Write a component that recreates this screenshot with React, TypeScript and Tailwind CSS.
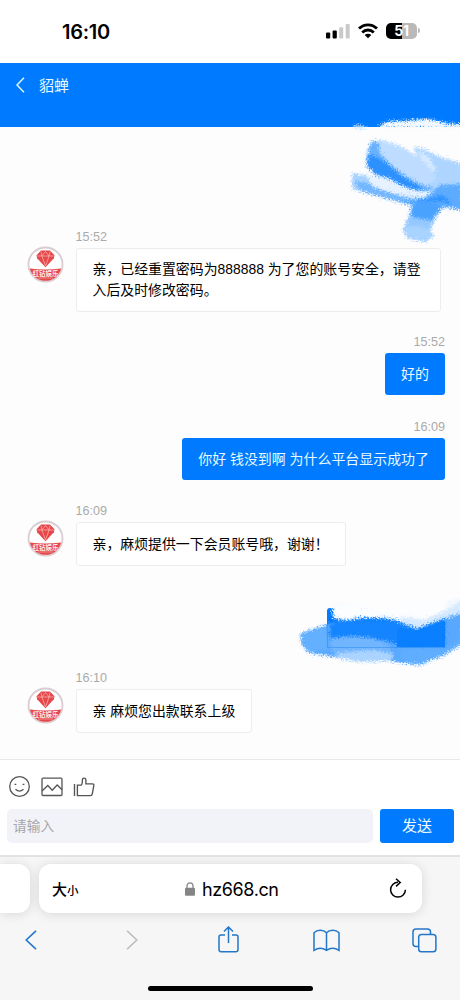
import { ReactNode } from 'react';
import clsx from 'clsx';

type Message = {
  id: number;
  time?: string;
  text: ReactNode;
  mine?: boolean;
  className?: string;
};

const messages: Message[] = [
  {
    id: 1,
    time: '15:52',
    text: '亲，已经重置密码为888888 为了您的账号安全，请登入后及时修改密码。',
    className: 'h-[105px]',
  },
  { id: 2, time: '15:52', text: '好的', mine: true, className: 'h-[85px]' },
  { id: 3, time: '16:09', text: '你好 钱没到啊 为什么平台显示成功了', mine: true, className: 'h-[84px]' },
  { id: 4, time: '16:09', text: '亲，麻烦提供一下会员账号哦，谢谢！', className: 'h-[86px]' },
  { id: 5, text: '', mine: true, className: 'h-[81px]' },
  { id: 6, time: '16:10', text: '亲 麻烦您出款联系上级', className: 'h-[64px]' },
];

function StatusBar() {
  return (
    <div className="flex h-[63px] justify-between bg-white pl-[62px] pr-[40px] text-black">
      <span className="mt-[18px] font-[Inter] text-[20px] font-semibold leading-7 tracking-[-0.3px]">16:10</span>
      <div className="mt-[22px] flex h-[17px] items-center">
        <svg width="24" height="16" viewBox="0 0 24 16" className="mr-[8px]">
          <rect x="0" y="9.5" width="4.2" height="6" rx="1" />
          <rect x="6.6" y="7.5" width="4.2" height="8" rx="1" />
          <rect x="13.2" y="4.2" width="4" height="11.3" rx="1" fill="#c9c9c9" />
          <rect x="19.7" y="1" width="4" height="14.5" rx="1" fill="#c9c9c9" />
        </svg>
        <svg width="20" height="16" viewBox="0 0 20 16" fill="none" stroke="black" strokeWidth="2.8" className="mr-[8px]">
          <path d="M1 5.6C6 .5 14 .5 19 5.6" />
          <path d="M4.2 9.4C7.5 6.2 12.5 6.2 15.8 9.4" />
          <path d="M6.7 11.9C8.6 10.3 11.4 10.3 13.3 11.9L10 15.3z" fill="black" stroke="none" />
        </svg>
        <div className="flex items-center">
          <div className="flex h-4 w-[31px] items-center justify-center rounded-[5px] bg-[linear-gradient(90deg,#000_51%,#b9b9b9_51%)] font-[Inter] text-[14px] font-bold leading-4 tracking-[-0.3px] text-white">
            51
          </div>
          <div className="ml-px h-[5px] w-[2px] rounded-r-full bg-[#b9b9b9]" />
        </div>
      </div>
    </div>
  );
}

function Header() {
  return (
    <header className="flex h-16 bg-[#007bff] pl-4 text-[#e6faff]">
      <svg width="9" height="16" viewBox="0 0 9 16" fill="none" stroke="currentColor" strokeWidth="1.4" className="mt-[14px]">
        <path d="M8 .8L1 8l7 7.2" />
      </svg>
      <h1 className="ml-[14px] mt-[12px] text-[15px] leading-[22px]">貂蝉</h1>
    </header>
  );
}

function Avatar() {
  return (
    <svg width="37" height="37" viewBox="0 0 37 37" className="absolute left-[-49px] top-[17.5px]">
      <circle cx="18.5" cy="18.5" r="17" fill="white" stroke="#d9cdd1" strokeWidth="1.8" />
      <path d="M2.8 22.6Q18.5 24.5 34.2 22.6A16.2 16.2 0 0 1 2.8 22.6z" fill="#e5484b" />
      <path d="M14 4.6h9l4.5 4.6-.6 3-8.4 9-8.4-9-.6-3z" fill="#e5474b" />
      <path
        d="M10.2 10h16.6M14 5.5l.9 4.5 3.6-4.5 3.6 4.5.9-4.5M14.9 10l3.6 10 3.6-10"
        fill="none"
        stroke="#ffb9b5"
        strokeWidth=".7"
      />
      <text x="18.5" y="29.8" textAnchor="middle" fontSize="6.4" fontWeight="700" fill="#ffe9e6">
        红钻娱乐
      </text>
      <path d="M11 32h15" stroke="#f5a5a5" strokeWidth=".7" />
    </svg>
  );
}

function MessageRow({ message }: { message: Message }) {
  const { time, text, mine, className } = message;

  return (
    <div className={clsx('relative flex flex-col', mine ? 'items-end' : 'items-start', className)}>
      {!mine && <Avatar />}
      <div className="h-5 font-['Liberation_Sans'] text-[12.6px] leading-[18px] text-[#aaa]">{time}</div>
      <div
        className={clsx(
          'rounded-[3px] leading-[21px]',
          mine
            ? 'min-h-[42px] min-w-[60px] bg-[#007bff] px-4 py-[10.5px] text-[13.95px] text-[#e9f9ff]'
            : 'mr-1 border border-[#ededed] bg-white px-4 pb-[10px] text-[13.9px] text-black',
          !mine && (message.id === 1 ? 'pt-[10px]' : 'pt-[11px]'),
          !time && 'h-10 min-h-0 w-[118px]'
        )}
      >
        {text}
      </div>
    </div>
  );
}

// Marker strokes painted over the conversation
function Scribbles() {
  return (
    <svg width="460" height="680" viewBox="0 0 460 680" fill="none" className="pointer-events-none absolute left-0 top-0">
      <defs>
        <filter id="rough" x="-20%" y="-30%" width="140%" height="160%" colorInterpolationFilters="sRGB">
          <feTurbulence type="fractalNoise" baseFrequency="0.65" numOctaves="2" seed="4" result="noise" />
          <feGaussianBlur in="SourceGraphic" stdDeviation="0.9" result="soft" />
          <feDisplacementMap in="soft" in2="noise" scale="8" xChannelSelector="R" yChannelSelector="G" />
          <feGaussianBlur stdDeviation="0.5" />
        </filter>
      </defs>

      <g filter="url(#rough)">
        <path d="M378 128l5-5 10-2 12 0 10-1 13-1 9 2 12 3 15 0v4z" fill="#f4faff" />
        <path d="M353 128l2-3 9 1 4 3z" fill="#c9e4ff" />
        <path d="M413 147L424 149 440 157 462 163V208Q446 210 430 205L412 188 426 176z" fill="#aed5ff" />
        <path d="M352 173L368 176 434 187 440 198 410 205 376 196 352 189z" fill="#a8d2ff" />
        <path d="M418 150L430 158 436 170 428 176 422 164z" fill="#d6eaff" />
        <path d="M371 141Q365 158 367 168L383 176 405 184 424 193 433 188 420 176 400 160 382 142z" fill="#69b1ff" />
        <path d="M378 140Q397 142 412 153L426 163 437 178 428 187Q398 176 380 153z" fill="#bddcff" />
        <path d="M368 154Q382 158 394 170Q405 179 424 189Q412 193 392 185Q376 178 368 166z" fill="#2c91ff" />
        <path d="M354 181L372 184 400 196 414 201 388 199 360 190z" fill="#72b6ff" />
        <path d="M366 174Q383 174 399 184T440 190L430 197Q397 198 372 186z" fill="#e6f2ff" />
        <path d="M387 199Q410 203 426 197L440 185 462 184V211L445 207 430 204 408 204z" fill="#5dabff" />
        <path d="M396 201Q422 202 442 195L452 203 430 204z" fill="#2f93ff" />
        <path d="M412 202Q424 203 444 202L441 210 434 221 430 230 434 236 424 242 407 238 403 230 409 216z" fill="#94c8ff" />
        <path d="M413 203L443 203 440 210 431 220 411 217z" fill="#4aa2ff" />
        <path d="M405 227Q418 224 430 230L433 236 421 241 406 236z" fill="#a9d3ff" />
      </g>

      <g filter="url(#rough)">
        <path d="M332 603L400 608 430 604 462 597V618L421 630 396 620 384 618 360 618 346 621 333 618z" fill="#f3f9ff" />
        <path d="M334 605L400 605 446 600 448 613 421 625 399 619 384 617 360 617 346 620 334 613z" fill="#fbfdff" />
        <path d="M400 616L424 620 446 610 462 600V614L445 623 419 629 404 624z" fill="#d5e9ff" />
        <path d="M300 634L310 630 328 624 350 620 397 621 416 629 440 620 462 613V643L443 655 420 665 401 663 386 660 356 661 335 657 309 653 302 645z" fill="#58a8ff" />
        <path d="M301 635L326 627 329 650 308 652z" fill="#63b0ff" />
        <path d="M330 625L347 620 381 620 395 620 416 630 445 618V645L401 646 388 641 362 637 330 639z" fill="#1484ff" />
        <path d="M331 638L352 636 373 638 389 645 394 657 367 652 331 652z" fill="#72b5ff" />
        <path d="M334 653L374 650 394 654 391 661 362 662 341 659z" fill="#abd3ff" />
        <path d="M400 647L445 648 462 637V644L443 656 417 664 400 659z" fill="#5fadff" />
      </g>
      <path d="M397 628l20 2 28-9v26h-48z" fill="#0a7fff" />
      <path d="M327.5 620v27.5H445" stroke="#167dec" strokeOpacity=".4" />
    </svg>
  );
}

function Composer() {
  return (
    <div className="h-24 border-t border-[#e9e9e9] bg-white">
      <div className="flex h-[49px] items-center gap-[11px] pl-[9px] pt-[4px] text-[#555]">
        <svg width="21" height="21" viewBox="0 0 21 21" fill="none" stroke="currentColor" strokeWidth="1.3">
          <circle cx="10.5" cy="10.5" r="9.8" />
          <path d="M6.5 13.2Q10.5 17 14.5 13.2" />
          <path d="M6.4 7.7v1.4M14.5 7.7v1.4" strokeWidth="1.8" />
        </svg>
        <svg width="22" height="20" viewBox="0 0 22 20" fill="none" stroke="currentColor" strokeWidth="1.3" className="mt-px">
          <rect x="1" y="1.2" width="20" height="17.3" rx="1" />
          <path d="M1 14l5.8-5.5 4.4 4.7 5-5.2L21 12.8" />
        </svg>
        <svg width="22" height="20" viewBox="0 0 22 20" fill="none" stroke="currentColor" strokeWidth="1.35" className="-ml-px">
          <path d="M1.5 7v12M4.4 18.6V8.1h3.8c1.1-.7 1.2-2.1 1.2-5.2 0-2.4 3.2-2.4 3.5 0v3.9h6.4q1.9 0 1.5 1.8l-1.5 8.3q-.3 1.7-2 1.7z" />
        </svg>
      </div>
      <div className="flex h-[34px] gap-[7px] pl-[7px] pr-[6px]">
        <input
          placeholder="请输入"
          className="w-[366px] rounded-[5px] bg-[#f2f3f8] px-[6px] pt-[2px] text-[13.7px] placeholder:text-[#a6a6aa] focus:outline-none"
        />
        <button className="h-[34px] flex-1 rounded-[3px] bg-[#007bff] text-[15px] text-[#edfaff]">发送</button>
      </div>
    </div>
  );
}

function BrowserBar() {
  return (
    <div className="h-[145px] overflow-hidden border-t-2 border-[#e2e2e2] bg-[#f6f6f6]">
      <div className="mt-[7px] flex h-[49px] gap-[9px]">
        <div className="w-[30px] rounded-r-xl bg-white shadow-[0_1px_12px_rgba(0,0,0,0.13)]" />
        <div className="flex w-[383px] items-center rounded-xl bg-white pl-[13px] pr-[15px] text-black shadow-[0_1px_12px_rgba(0,0,0,0.13)]">
          <div className="flex items-baseline pt-[3px] font-medium">
            <span className="text-[15px]">大</span>
            <span className="text-[11.5px]">小</span>
          </div>
          <svg width="10" height="14" viewBox="0 0 10 14" className="ml-[106.5px]">
            <rect y="5.8" width="10" height="8" rx="1" fill="#858585" />
            <path d="M2 6V4C2-.2 8-.2 8 4v2" fill="none" stroke="#858585" strokeWidth="1.3" />
          </svg>
          <span className="ml-[7px] pt-px font-[Inter] text-[18px] tracking-[-0.4px]">hz668.cn</span>
          <svg width="18" height="20" viewBox="0 0 18 20" fill="none" stroke="currentColor" strokeWidth="1.5" className="mb-[2px] ml-auto">
            <path d="M9 4.3A7.4 7.4 0 1 0 16.4 11.7M7 .8l4.2 3.7L7 8.4" />
          </svg>
        </div>
      </div>
      <nav className="mt-[12px] flex h-[30px] items-center pl-[25px] text-[#2476ca]">
        <svg width="12" height="20" viewBox="0 0 12 20" fill="none" stroke="currentColor" strokeWidth="1.6">
          <path d="M11 .8L1.2 10 11 19.2" />
        </svg>
        <svg width="12" height="20" viewBox="0 0 12 20" fill="none" stroke="#bbb" strokeWidth="1.5" className="ml-[89px]">
          <path d="M1 .8L10.8 10 1 19.2" />
        </svg>
        <svg width="21" height="27" viewBox="0 0 21 27" fill="none" stroke="currentColor" strokeWidth="1.5" className="mb-[2px] ml-[80px]">
          <path d="M7 9H3Q1 9 1 11v12.5q0 2.3 2.3 2.3h14.4q2.3 0 2.3-2.3V11q0-2-2-2h-4M10.5 17V1M6 5.5L10.5 1 15 5.5" />
        </svg>
        <svg width="27" height="23" viewBox="0 0 27 23" fill="none" stroke="currentColor" strokeWidth="1.5" className="ml-[74px]">
          <path d="M13.5 21.3C10 19 5 18.8 1 21.3V3.7C4 .5 10.5.5 13.5 3.7c3-3.2 9.5-3.2 12.5 0v17.6c-4-2.5-9-2.3-12.5 0zM13.5 3.7v17.6" />
        </svg>
        <svg width="25" height="25" viewBox="0 0 25 25" fill="none" stroke="currentColor" strokeWidth="1.5" className="ml-[72px]">
          <path d="M6.5 18.5H4q-3 0-3-3V4q0-3 3-3h11.5q3 0 3 3v2.3" />
          <rect x="6.7" y="6.5" width="17.2" height="17.2" rx="2.8" />
        </svg>
      </nav>
      <div className="ml-[148px] mt-[31px] h-[5px] w-[165px] rounded-full bg-black" />
    </div>
  );
}

function App() {
  return (
    <div className="relative h-[1000px] w-[460px] overflow-hidden bg-white font-['Liberation_Sans','Noto_Sans_CJK_SC',sans-serif]">
      <StatusBar />
      <Header />
      <main className="h-[632px] bg-[#fdfdfd] pl-[75.5px] pr-[15px] pt-[101px]">
        {messages.map((message) => (
          <MessageRow key={message.id} message={message} />
        ))}
      </main>
      <Composer />
      <BrowserBar />
      <Scribbles />
    </div>
  );
}

export default App;
